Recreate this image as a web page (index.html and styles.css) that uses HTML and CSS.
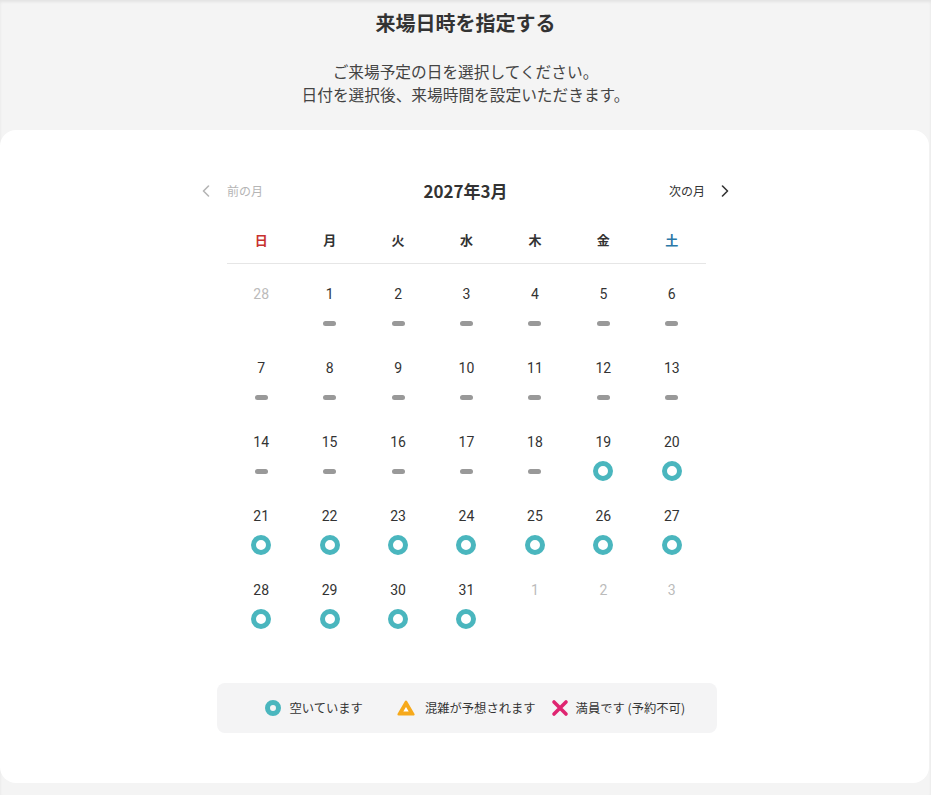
FILE: index.html
```html
<!DOCTYPE html>
<html lang="ja">
<head>
<meta charset="utf-8">
<title>来場日時を指定する</title>
<link rel="stylesheet" href="styles.css">
</head>
<body>
<header class="intro">
  <h1 class="title">来場日時を指定する</h1>
  <p class="lead">ご来場予定の日を選択してください。<br>日付を選択後、来場時間を設定いただきます。</p>
</header>
<main class="card">
  <section class="calendar">
    <div class="cal-nav">
      <button class="nav-btn prev" type="button">
        <svg class="chev" viewBox="0 0 8 12" width="8" height="12"><path d="M6.5 1 L1.5 6 L6.5 11" fill="none" stroke="currentColor" stroke-width="1.6" stroke-linecap="round" stroke-linejoin="round"/></svg>
        <span>前の月</span>
      </button>
      <h2 class="month">2027年3月</h2>
      <button class="nav-btn next" type="button">
        <span>次の月</span>
        <svg class="chev" viewBox="0 0 8 12" width="8" height="12"><path d="M1.5 1 L6.5 6 L1.5 11" fill="none" stroke="currentColor" stroke-width="1.6" stroke-linecap="round" stroke-linejoin="round"/></svg>
      </button>
    </div>
    <div class="weekdays">
      <div class="wd sun">日</div><div class="wd">月</div><div class="wd">火</div><div class="wd">水</div><div class="wd">木</div><div class="wd">金</div><div class="wd sat">土</div>
    </div>
    <div class="days">
      <div class="day out"><span class="num">28</span></div>
      <div class="day"><span class="num">1</span><span class="mark bar"></span></div>
      <div class="day"><span class="num">2</span><span class="mark bar"></span></div>
      <div class="day"><span class="num">3</span><span class="mark bar"></span></div>
      <div class="day"><span class="num">4</span><span class="mark bar"></span></div>
      <div class="day"><span class="num">5</span><span class="mark bar"></span></div>
      <div class="day"><span class="num">6</span><span class="mark bar"></span></div>

      <div class="day"><span class="num">7</span><span class="mark bar"></span></div>
      <div class="day"><span class="num">8</span><span class="mark bar"></span></div>
      <div class="day"><span class="num">9</span><span class="mark bar"></span></div>
      <div class="day"><span class="num">10</span><span class="mark bar"></span></div>
      <div class="day"><span class="num">11</span><span class="mark bar"></span></div>
      <div class="day"><span class="num">12</span><span class="mark bar"></span></div>
      <div class="day"><span class="num">13</span><span class="mark bar"></span></div>

      <div class="day"><span class="num">14</span><span class="mark bar"></span></div>
      <div class="day"><span class="num">15</span><span class="mark bar"></span></div>
      <div class="day"><span class="num">16</span><span class="mark bar"></span></div>
      <div class="day"><span class="num">17</span><span class="mark bar"></span></div>
      <div class="day"><span class="num">18</span><span class="mark bar"></span></div>
      <div class="day"><span class="num">19</span><span class="mark ring"></span></div>
      <div class="day"><span class="num">20</span><span class="mark ring"></span></div>

      <div class="day"><span class="num">21</span><span class="mark ring"></span></div>
      <div class="day"><span class="num">22</span><span class="mark ring"></span></div>
      <div class="day"><span class="num">23</span><span class="mark ring"></span></div>
      <div class="day"><span class="num">24</span><span class="mark ring"></span></div>
      <div class="day"><span class="num">25</span><span class="mark ring"></span></div>
      <div class="day"><span class="num">26</span><span class="mark ring"></span></div>
      <div class="day"><span class="num">27</span><span class="mark ring"></span></div>

      <div class="day"><span class="num">28</span><span class="mark ring"></span></div>
      <div class="day"><span class="num">29</span><span class="mark ring"></span></div>
      <div class="day"><span class="num">30</span><span class="mark ring"></span></div>
      <div class="day"><span class="num">31</span><span class="mark ring"></span></div>
      <div class="day out"><span class="num">1</span></div>
      <div class="day out"><span class="num">2</span></div>
      <div class="day out"><span class="num">3</span></div>
    </div>
  </section>
  <div class="legend">
    <div class="legend-item first">
      <svg class="licon" viewBox="0 0 16 16" width="16" height="16"><circle cx="8" cy="8" r="5.5" fill="none" stroke="#4ab6be" stroke-width="5"/></svg>
      <span>空いています</span>
    </div>
    <div class="legend-item second">
      <svg class="licon" viewBox="0 0 18 16" width="18" height="16"><path d="M9 1.8 L16.3 14.3 L1.7 14.3 Z" fill="#f6a91b" stroke="#f6a91b" stroke-width="2.6" stroke-linejoin="round"/><path d="M9 7 L11.7 11.6 L6.3 11.6 Z" fill="#fff"/></svg>
      <span>混雑が予想されます</span>
    </div>
    <div class="legend-item third">
      <svg class="licon" viewBox="0 0 18 18" width="18" height="18"><path d="M3 3 L15 15 M15 3 L3 15" fill="none" stroke="#df2571" stroke-width="3.6" stroke-linecap="round"/></svg>
      <span>満員です (予約不可)</span>
    </div>
  </div>
</main>
</body>
</html>
```

FILE: styles.css
```css
* { box-sizing: border-box; }

html, body {
  margin: 0;
  padding: 0;
}

body {
  background: #f4f4f4;
  font-family: "Noto Sans CJK JP", "Noto Sans", sans-serif;
  color: #333;
  min-height: 795px;
  box-shadow: inset 0 2px 3px rgba(0, 0, 0, 0.07);
}

.intro {
  padding-top: 8px;
  text-align: center;
}

.title {
  margin: 0;
  font-size: 20px;
  line-height: 30px;
  font-weight: 700;
  color: #333;
}

.lead {
  margin: 22px 0 0;
  font-size: 15.7px;
  line-height: 23px;
  color: #444;
}

.card {
  margin: 24px 2px 0 0;
  background: #fff;
  border-radius: 16px;
  padding: 49px 0 50px 4px;
}

.calendar {
  width: 479px;
  margin: 0 auto;
}

.cal-nav {
  display: grid;
  grid-template-columns: 1fr auto 1fr;
  align-items: center;
  height: 24px;
  margin: 0 -23px 21px -25px;
}

.nav-btn {
  display: flex;
  align-items: center;
  border: 0;
  background: none;
  padding: 0;
  font-family: inherit;
  font-size: 12px;
  line-height: 18px;
  cursor: pointer;
}

.nav-btn.prev {
  color: #b5b5b5;
  justify-self: start;
  gap: 17px;
}

.nav-btn.next {
  color: #333;
  justify-self: end;
  gap: 16px;
}

.chev { display: block; }

.month {
  margin: 0;
  font-size: 17px;
  line-height: 24px;
  font-weight: 700;
  color: #333;
}

.weekdays {
  display: grid;
  grid-template-columns: repeat(7, 1fr);
  border-bottom: 1px solid #e6e6e6;
}

.wd {
  text-align: center;
  font-size: 13px;
  font-weight: 700;
  line-height: 20px;
  padding: 6px 0 13px;
  color: #333;
}

.wd.sun { color: #c8312f; }
.wd.sat { color: #2b78a8; }

.days {
  display: grid;
  grid-template-columns: repeat(7, 1fr);
  grid-auto-rows: 74px;
}

.day {
  display: flex;
  flex-direction: column;
  align-items: center;
  padding-top: 21px;
}

.num {
  font-family: Roboto, "Noto Sans CJK JP", sans-serif;
  font-size: 14px;
  line-height: 18px;
  color: #333;
}

.day.out .num { color: #bbb; }

.mark { display: block; }

.mark.bar {
  width: 13px;
  height: 5px;
  border-radius: 3px;
  background: #999;
  margin-top: 18px;
}

.mark.ring {
  width: 20px;
  height: 20px;
  border: 5.5px solid #4ab6be;
  border-radius: 50%;
  margin-top: 10px;
}

.legend {
  width: 500px;
  margin: 49px auto 0;
  height: 50px;
  background: #f4f4f5;
  border-radius: 8px;
  display: flex;
  align-items: center;
  padding-left: 48px;
}

.legend-item {
  display: flex;
  align-items: center;
  gap: 9px;
  font-size: 12.3px;
  line-height: 18px;
  color: #333;
}

.legend-item.second { margin-left: 34px; gap: 10px; }
.legend-item.third { margin-left: 15px; gap: 7px; }

.licon { display: block; flex: none; }
```
